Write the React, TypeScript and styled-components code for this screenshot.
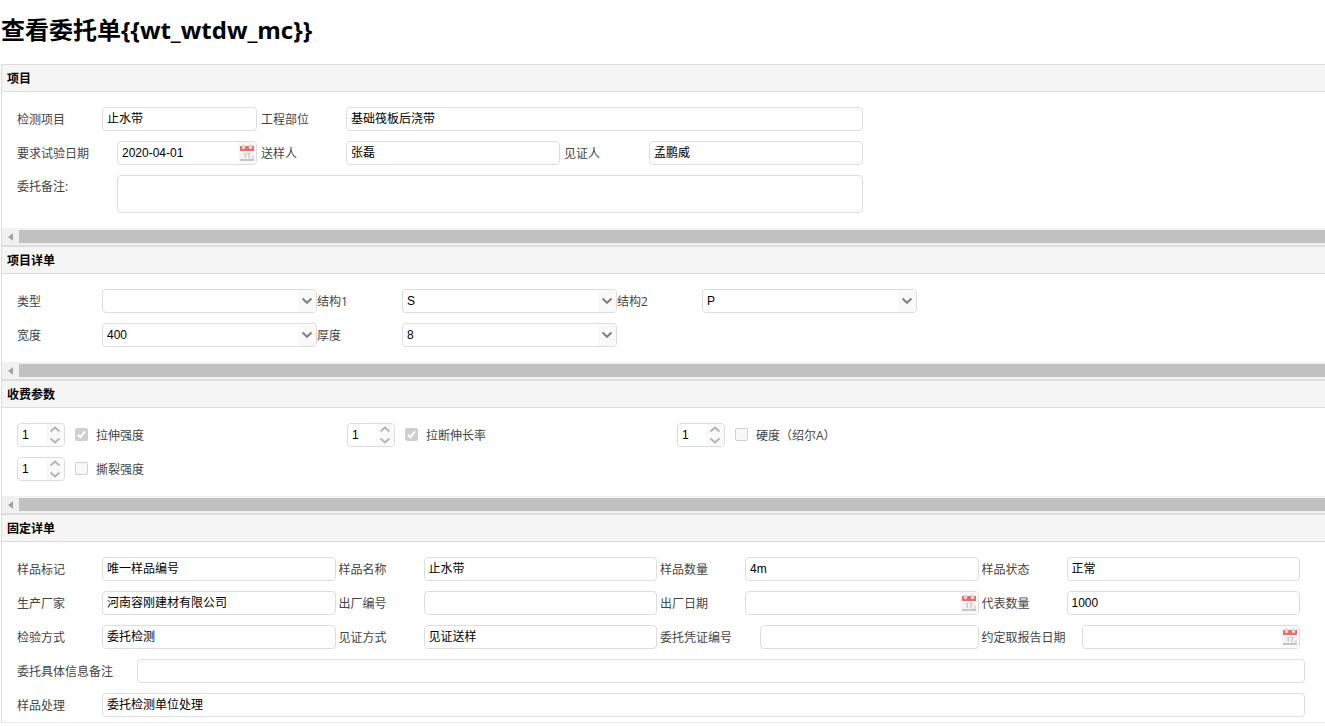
import React, { useId } from 'react';
import styled, { createGlobalStyle } from 'styled-components';

const line = '#dddddd';
const labelFont = '"Open Sans", "Noto Sans CJK SC", sans-serif';
const valueFont = '"Liberation Sans", "Noto Sans CJK SC", sans-serif';

const GlobalStyle = createGlobalStyle`
  *, *::before, *::after { box-sizing: border-box; }
  body {
    margin: 0;
    background: #fff;
    color: #000;
    font-family: ${labelFont};
    font-size: 12px;
    overflow-x: hidden;
  }
`;

const Page = styled.main`
  border-bottom: 1px solid #ebebeb;
`;

const Title = styled.h1`
  margin: 0;
  padding: 14px 0 18px 1px;
  font-size: 24px;
  line-height: 32px;
  font-weight: 700;
`;

const Panel = styled.section`
  margin-left: 1px;
  border: 1px solid ${line};
  border-right: 0;
  &:last-child { border-bottom: 0; }
`;

const PanelHeader = styled.h2`
  margin: 0;
  padding: 0 5px;
  height: 27px;
  border-bottom: 1px solid ${line};
  background: #f5f5f5;
  font-size: 12px;
  line-height: 28px;
  font-weight: 700;
`;

const PanelBody = styled.div<{ $bottom?: number }>`
  display: flex;
  flex-direction: column;
  gap: 10px;
  padding: 15px 20px ${p => p.$bottom ?? 15}px 15px;
`;

const Row = styled.div<{ $gap?: number }>`
  display: flex;
  column-gap: ${p => p.$gap ?? 4}px;
`;

const FourColumns = styled.div`
  display: grid;
  grid-template-columns: repeat(4, 1fr);
  column-gap: 3px;
  padding-right: 5px;
`;

const FieldBox = styled.div<{ $stretch?: boolean }>`
  display: flex;
  flex: ${p => (p.$stretch ? '1' : 'none')};
  min-width: 0;
`;

const Label = styled.label<{ $width: number; $top?: boolean }>`
  flex: none;
  width: ${p => p.$width}px;
  height: 24px;
  color: #444;
  line-height: ${p => (p.$top ? 24 : 26)}px;
  white-space: nowrap;
`;

const Control = styled.div<{ $width?: number }>`
  display: flex;
  ${p => (p.$width ? `flex: none; width: ${p.$width}px;` : 'flex: 1; min-width: 0;')}
  height: 24px;
  border: 1px solid ${line};
  border-radius: 4px;
  background: #fff;
  overflow: hidden;
`;

const Input = styled.input`
  flex: 1;
  min-width: 0;
  width: 100%;
  height: 22px;
  padding: 0 4px;
  border: 0;
  outline: 0;
  background: transparent;
  color: #000;
  font: 12px/22px ${valueFont};
  appearance: textfield;
  &::-webkit-inner-spin-button { appearance: none; margin: 0; }
`;

const TextArea = styled.textarea`
  width: 746px;
  height: 38px;
  padding: 2px 4px;
  border: 1px solid ${line};
  border-radius: 4px;
  outline: 0;
  resize: none;
  font: 12px/16px ${valueFont};
`;

const Select = styled.select`
  flex: 1;
  min-width: 0;
  height: 22px;
  padding: 0 4px;
  border: 0;
  outline: 0;
  appearance: none;
  background: transparent;
  color: #000;
  font: 12px/22px ${valueFont};
`;

const Trigger = styled.span`
  display: flex;
  flex: none;
  align-items: center;
  justify-content: center;
  width: 18px;
  height: 22px;
  background: #f9f9f9;
  pointer-events: none;
`;

const IconButton = styled.button`
  display: flex;
  flex: none;
  align-items: center;
  justify-content: center;
  width: 18px;
  height: 22px;
  padding: 0;
  border: 0;
  background: #f9f9f9;
`;

const Stepper = styled.div`
  display: flex;
  flex: none;
  flex-direction: column;
  width: 18px;
  background: #f9f9f9;
`;

const StepButton = styled.button`
  display: flex;
  align-items: center;
  justify-content: center;
  height: 11px;
  padding: 0;
  border: 0;
  background: transparent;
`;

const FeeGrid = styled.div`
  display: grid;
  grid-template-columns: repeat(3, 330px);
  row-gap: 10px;
`;

const Fee = styled.div`
  display: flex;
  align-items: flex-start;
`;

const Tick = styled.input`
  appearance: none;
  flex: none;
  width: 13px;
  height: 13px;
  margin: 5px 8px 0 10px;
  border: 1px solid #d0d0d0;
  border-radius: 2px;
  background: #f8f8f8;
  &:checked {
    border-color: #cfcfcf;
    background: #cfcfcf url("data:image/svg+xml,%3Csvg xmlns='http://www.w3.org/2000/svg' viewBox='0 0 11 11'%3E%3Cpath d='M2 5.8 4.3 8.2 9 2.4' fill='none' stroke='%23fff' stroke-width='2'/%3E%3C/svg%3E");
  }
`;

const FeeLabel = styled.label`
  height: 24px;
  color: #444;
  line-height: 26px;
`;

const ScrollBar = styled.div`
  display: flex;
  align-items: center;
  height: 17px;
  background: #f1f1f1;
`;

const ScrollArrow = styled.button`
  display: flex;
  flex: none;
  align-items: center;
  justify-content: center;
  width: 17px;
  height: 17px;
  padding: 0;
  border: 0;
  background: transparent;
`;

const ScrollThumb = styled.div`
  flex: 1;
  height: 13px;
  background: #c1c1c1;
`;

const CalendarIcon = () => (
  <svg width="16" height="18" viewBox="0 0 16 18" aria-hidden="true">
    <rect x="1" y="3" width="14" height="13" fill="#f3f3f3" />
    <rect x="1" y="2" width="14" height="5" fill="#e86c69" />
    <rect x="1" y="15" width="14" height="2" fill="#c6c6c6" />
    <rect x="3" y="1" width="3" height="4" rx="1" fill="#e4e0e0" stroke="#c4b8b8" strokeWidth=".5" />
    <rect x="10" y="1" width="3" height="4" rx="1" fill="#e4e0e0" stroke="#c4b8b8" strokeWidth=".5" />
    <path d="M5 10.2 6.3 9.4V14M8 9.6h3L9.3 14" fill="none" stroke="#bdbdbd" />
    <path d="M15 11v4h-4z" fill="#dedede" />
  </svg>
);

const Chevron = () => (
  <svg width="12" height="8" viewBox="0 0 12 8" aria-hidden="true">
    <path d="M1.5 1.5 6 5.8l4.5-4.3" fill="none" stroke="#808080" strokeWidth="2" />
  </svg>
);

const StepIcon = ({ up }: { up?: boolean }) => (
  <svg width="12" height="7" viewBox="0 0 12 7" aria-hidden="true">
    <path d={up ? 'M1.5 5.5 6 1.6l4.5 3.9' : 'M1.5 1.5 6 5.4l4.5-3.9'} fill="none" stroke="#b4b4b4" strokeWidth="2" />
  </svg>
);

type FieldProps = {
  label: string;
  value?: string;
  labelWidth?: number;
  width?: number;
  kind?: 'text' | 'date' | 'select';
  stretch?: boolean;
};

function Field({ label, value = '', labelWidth = 85, width, kind = 'text', stretch }: FieldProps) {
  const id = useId();
  return (
    <FieldBox $stretch={stretch}>
      <Label htmlFor={id} $width={labelWidth}>{label}</Label>
      <Control $width={width}>
        {kind === 'select' ? (
          <>
            <Select id={id} defaultValue={value}>
              <option value={value}>{value}</option>
            </Select>
            <Trigger><Chevron /></Trigger>
          </>
        ) : (
          <Input id={id} defaultValue={value} />
        )}
        {kind === 'date' && (
          <IconButton type="button" aria-label={label}><CalendarIcon /></IconButton>
        )}
      </Control>
    </FieldBox>
  );
}

function FeeItem({ label, checked }: { label: string; checked?: boolean }) {
  const id = useId();
  return (
    <Fee>
      <Control $width={48}>
        <Input type="number" defaultValue={1} aria-label={label} />
        <Stepper>
          <StepButton type="button" aria-label="+"><StepIcon up /></StepButton>
          <StepButton type="button" aria-label="-"><StepIcon /></StepButton>
        </Stepper>
      </Control>
      <Tick type="checkbox" id={id} defaultChecked={checked} disabled />
      <FeeLabel htmlFor={id}>{label}</FeeLabel>
    </Fee>
  );
}

const HorizontalScroll = () => (
  <ScrollBar>
    <ScrollArrow type="button" aria-label="←">
      <svg width="5" height="8" viewBox="0 0 5 8" aria-hidden="true">
        <path d="M5 0v8L0 4z" fill="#a3a3a3" />
      </svg>
    </ScrollArrow>
    <ScrollThumb />
  </ScrollBar>
);

export default function App() {
  return (
    <Page>
      <GlobalStyle />
      <Title>{'查看委托单{{wt_wtdw_mc}}'}</Title>

      <Panel>
        <PanelHeader>项目</PanelHeader>
        <PanelBody>
          <Row>
            <Field label="检测项目" value="止水带" width={155} />
            <Field label="工程部位" value="基础筏板后浇带" width={517} />
          </Row>
          <Row>
            <Field label="要求试验日期" value="2020-04-01" labelWidth={100} width={140} kind="date" />
            <Field label="送样人" value="张磊" width={214} />
            <Field label="见证人" value="孟鹏威" width={214} />
          </Row>
          <Row $gap={0}>
            <Label htmlFor="remark" $width={100} $top>委托备注:</Label>
            <TextArea id="remark" />
          </Row>
        </PanelBody>
        <HorizontalScroll />
      </Panel>

      <Panel>
        <PanelHeader>项目详单</PanelHeader>
        <PanelBody>
          <Row $gap={0}>
            <Field label="类型" width={215} kind="select" />
            <Field label="结构1" value="S" width={215} kind="select" />
            <Field label="结构2" value="P" width={215} kind="select" />
          </Row>
          <Row $gap={0}>
            <Field label="宽度" value="400" width={215} kind="select" />
            <Field label="厚度" value="8" width={215} kind="select" />
          </Row>
        </PanelBody>
        <HorizontalScroll />
      </Panel>

      <Panel>
        <PanelHeader>收费参数</PanelHeader>
        <PanelBody>
          <FeeGrid>
            <FeeItem label="拉伸强度" checked />
            <FeeItem label="拉断伸长率" checked />
            <FeeItem label="硬度（绍尔A）" />
            <FeeItem label="撕裂强度" />
          </FeeGrid>
        </PanelBody>
        <HorizontalScroll />
      </Panel>

      <Panel>
        <PanelHeader>固定详单</PanelHeader>
        <PanelBody $bottom={5}>
          <FourColumns>
            <Field label="样品标记" value="唯一样品编号" />
            <Field label="样品名称" value="止水带" />
            <Field label="样品数量" value="4m" />
            <Field label="样品状态" value="正常" />
          </FourColumns>
          <FourColumns>
            <Field label="生产厂家" value="河南容刚建材有限公司" />
            <Field label="出厂编号" />
            <Field label="出厂日期" kind="date" />
            <Field label="代表数量" value="1000" />
          </FourColumns>
          <FourColumns>
            <Field label="检验方式" value="委托检测" />
            <Field label="见证方式" value="见证送样" />
            <Field label="委托凭证编号" labelWidth={100} />
            <Field label="约定取报告日期" labelWidth={100} kind="date" />
          </FourColumns>
          <Row>
            <Field label="委托具体信息备注" labelWidth={120} stretch />
          </Row>
          <Row>
            <Field label="样品处理" value="委托检测单位处理" stretch />
          </Row>
        </PanelBody>
      </Panel>
    </Page>
  );
}
